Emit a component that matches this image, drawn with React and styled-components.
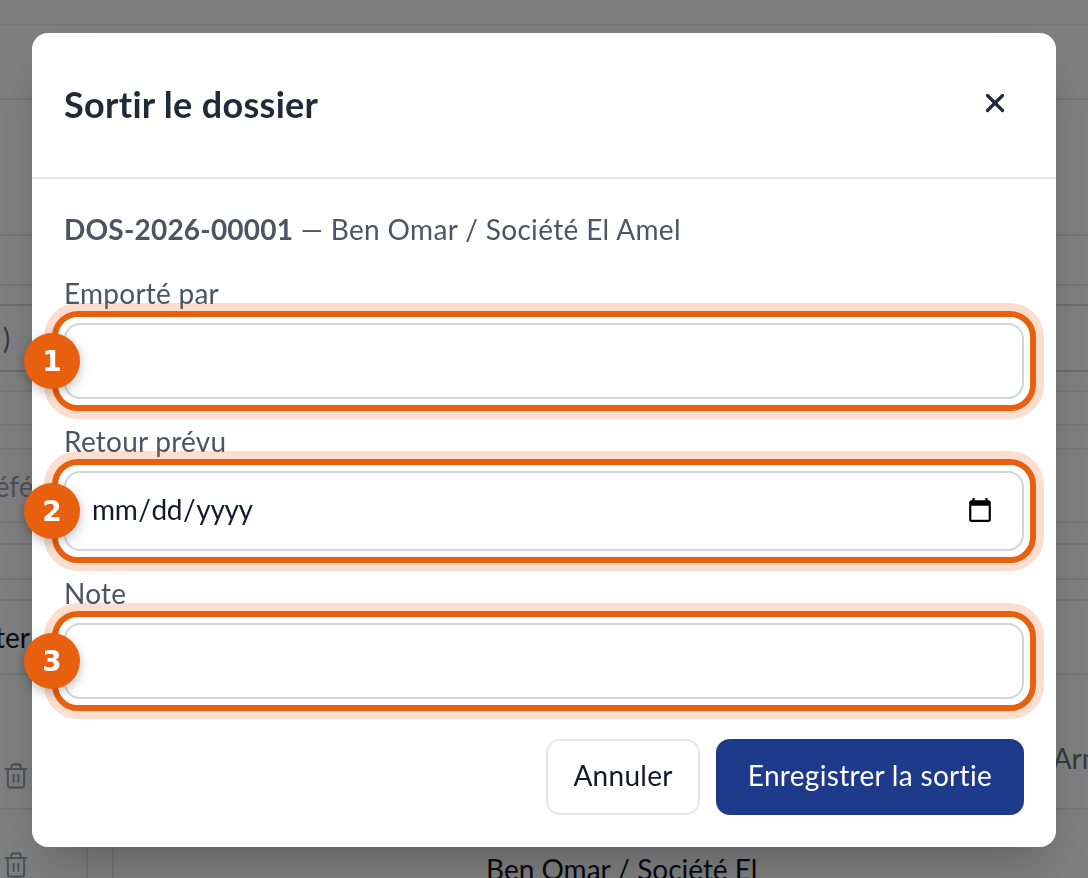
import styled, { createGlobalStyle } from 'styled-components'
import { Trash2, X } from 'lucide-react'

const GlobalStyle = createGlobalStyle`
  html, body {
    margin: 0;
    height: 100%;
    overflow: hidden;
    background: #fff;
    font-family: "Lato", "Noto Sans", sans-serif;
  }
`

// page behind the dialog
const Page = styled.div`
  height: 878px;
  overflow: hidden;
  color: #111827;
  font-size: 28px;
`
const Row = styled.div`
  height: ${(p) => p.$h}px;
  box-sizing: border-box;
  border-bottom: 2px solid ${(p) => (p.$strong ? '#d6d7d9' : '#e9eaec')};
  display: flex;
  align-items: center;
  justify-content: space-between;
  white-space: nowrap;
`
const CutText = styled.span`
  margin-left: ${(p) => p.$left}px;
  color: ${(p) => p.$color || '#111827'};
`
const TrashCell = styled.span`
  display: flex;
  margin: 68px 0 0 2px;
  color: #9ca3af;
`
const RightText = styled.span`
  margin-right: -62px;
  margin-top: 32px;
  color: #6b7280;
`
const LastRow = styled.div`
  height: 68px;
  display: flex;
`
const FirstCell = styled.div`
  width: 86px;
  padding-top: 41px;
  color: #9ca3af;
  border-right: 2px solid #e5e7eb;
  & svg { margin-left: 2px; }
`
const SecondCell = styled.div`
  width: 24px;
  border-right: 2px solid #e5e7eb;
`
const TextCell = styled.div`
  padding: 42px 0 0 372px;
  white-space: nowrap;
`

const Overlay = styled.div`
  position: fixed;
  inset: 0;
  background: rgba(0, 0, 0, 0.5);
`
const Modal = styled.div`
  position: absolute;
  top: 33px;
  left: 32px;
  width: 1024px;
  height: 814px;
  box-sizing: border-box;
  background: #fff;
  border-radius: 16px;
  box-shadow: 0 25px 50px -12px rgba(0, 0, 0, 0.25);
`
const Header = styled.div`
  height: 146px;
  box-sizing: border-box;
  border-bottom: 2px solid #e5e7eb;
  padding: 0 32px 2px;
  display: flex;
  align-items: center;
  justify-content: space-between;
`
const Title = styled.h2`
  margin: 0;
  font-size: 36px;
  font-weight: 700;
  letter-spacing: 0.3px;
  color: #1f2937;
`
const CloseButton = styled.button`
  display: flex;
  padding: 0;
  margin-right: 14px;
  margin-bottom: 2px;
  border: 0;
  background: none;
  color: #1f2937;
`
const Body = styled.div`
  padding: 30px 32px 0;
`
const Summary = styled.p`
  margin: 0 0 26px;
  font-size: 28px;
  line-height: 40px;
  letter-spacing: 0.35px;
  color: #4b5563;
  & strong { font-weight: 700; letter-spacing: 0.2px; }
`
const Field = styled.div`
  position: relative;
  margin-bottom: 24px;
`
const Label = styled.label`
  display: block;
  margin-bottom: 12px;
  font-size: 28px;
  line-height: 36px;
  letter-spacing: 0.25px;
  color: #4b5563;
`
const InputWrap = styled.div`
  position: relative;
`
const Input = styled.input`
  display: block;
  width: 100%;
  height: ${(p) => p.$h}px;
  box-sizing: border-box;
  padding: 0 28px 0 26px;
  border: 2px solid #d1d5db;
  border-radius: 16px;
  background: #fff;
  color: #111827;
  font-family: inherit;
  font-size: 28px;
  &::-webkit-datetime-edit {
    letter-spacing: -0.4px;
    margin-left: -1px;
    padding-bottom: 4px;
  }
  &::-webkit-calendar-picker-indicator {
    width: 28px;
    height: 28px;
    padding: 0;
    margin: 0;
  }
`
const Highlight = styled.div`
  position: absolute;
  inset: -12px;
  border: 6px solid #e85f0e;
  border-radius: 26px;
  box-shadow: 0 0 0 8px rgba(234, 88, 12, 0.2);
  pointer-events: none;
`
const Badge = styled.div`
  position: absolute;
  left: -40px;
  top: 50%;
  width: 56px;
  height: 56px;
  margin-top: -28px;
  border-radius: 50%;
  background: #e85f0e;
  color: #fff;
  font-family: "DejaVu Sans", sans-serif;
  font-size: 28px;
  font-weight: 700;
  display: flex;
  align-items: center;
  justify-content: center;
  box-shadow: 0 4px 12px rgba(0, 0, 0, 0.25);
`
const Actions = styled.div`
  display: flex;
  justify-content: flex-end;
  gap: 16px;
  margin-top: 40px;
`
const Button = styled.button`
  height: 76px;
  box-sizing: border-box;
  padding: 0 ${(p) => (p.$primary ? 30 : 25)}px 4px;
  border: 2px solid ${(p) => (p.$primary ? '#1e3a8a' : '#e5e7eb')};
  border-radius: 14px;
  background: ${(p) => (p.$primary ? '#1e3a8a' : '#fff')};
  color: ${(p) => (p.$primary ? '#fff' : '#111827')};
  font-family: inherit;
  font-size: 28px;
  letter-spacing: 0.3px;
`

const fields = [
  { label: 'Emporté par', type: 'text', height: 76 },
  { label: 'Retour prévu', type: 'date', height: 80 },
  { label: 'Note', type: 'text', height: 76 },
]

function App () {
  return (
    <>
      <GlobalStyle />
      <Page>
        <Row $h={26} />
        <Row $h={74} />
        <Row $h={136} />
        <Row $h={50} />
        <Row $h={20} $strong />
        <Row $h={66} $strong><CutText $left={-12} $color='#6b7280'>( )</CutText></Row>
        <Row $h={20} />
        <Row $h={34} />
        <Row $h={24} />
        <Row $h={73}><CutText $left={-22} $color='#9ca3af'>Référence</CutText></Row>
        <Row $h={22} />
        <Row $h={35} />
        <Row $h={21} />
        <Row $h={74}><CutText $left={-62}>Ajouter</CutText></Row>
        <Row $h={135}>
          <TrashCell><Trash2 size={28} strokeWidth={1.8} /></TrashCell>
          <RightText>Armand</RightText>
        </Row>
        <LastRow>
          <FirstCell><Trash2 size={28} strokeWidth={1.8} /></FirstCell>
          <SecondCell />
          <TextCell>Ben Omar / Société El</TextCell>
        </LastRow>
      </Page>
      <Overlay>
        <Modal>
          <Header>
            <Title>Sortir le dossier</Title>
            <CloseButton><X size={30} strokeWidth={2.6} /></CloseButton>
          </Header>
          <Body>
            <Summary><strong>DOS-2026-00001</strong> — Ben Omar / Société El Amel</Summary>
            {fields.map((f, i) => (
              <Field key={f.label}>
                <Label>{f.label}</Label>
                <InputWrap>
                  <Input type={f.type} $h={f.height} />
                  <Highlight />
                  <Badge>{i + 1}</Badge>
                </InputWrap>
              </Field>
            ))}
            <Actions>
              <Button>Annuler</Button>
              <Button $primary>Enregistrer la sortie</Button>
            </Actions>
          </Body>
        </Modal>
      </Overlay>
    </>
  )
}

export default App
